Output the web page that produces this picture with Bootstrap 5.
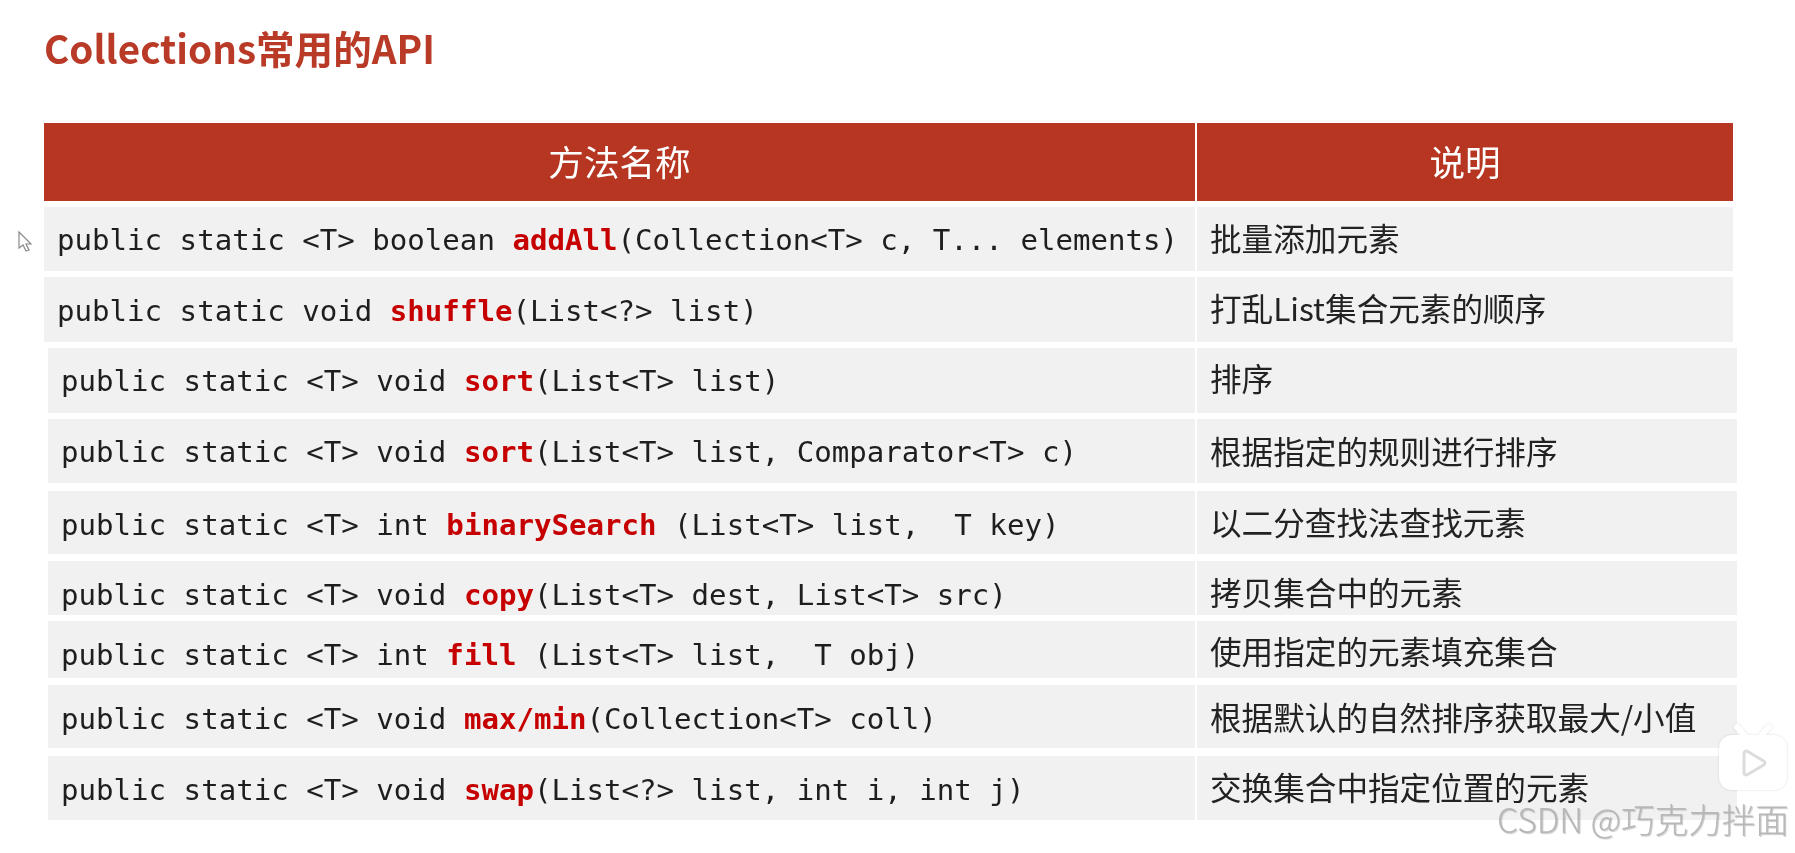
<!DOCTYPE html>
<html lang="zh">
<head>
<meta charset="utf-8">
<title>Collections常用的API</title>
<link href="https://cdn.jsdelivr.net/npm/bootstrap@5.3.0/dist/css/bootstrap.min.css" rel="stylesheet">
<style>
html,body{height:853px;overflow:hidden;background:#fff}
.sheet{position:relative;width:1795px;height:853px;padding:0 62px 0 44px;font-family:"DejaVu Sans Mono","Noto Sans CJK SC",monospace;filter:blur(.45px)}
.sheet-title{height:123px;padding-top:22px;margin:0;font:700 38.6px/50px "Noto Sans CJK SC",sans-serif;color:#b93a27}
.api-row{display:flex;gap:2px;margin-top:6px}
.api-row.shifted{margin-left:4px;margin-right:-4px}
.api-head{height:78px;margin-top:0}
.api-head .cell-a,.api-head .cell-b{background:#b73622;color:#fff;font:400 35.6px/76px "Noto Sans CJK SC",sans-serif;text-align:center;padding:0}
.cell-a{flex:0 0 1151px;background:#f1f1f1;padding-left:13px;font-size:29.1px;line-height:var(--la);color:#1e1e1e;white-space:pre}
.shifted .cell-a{flex-basis:1147px}
.cell-b{flex:1 1 0;min-width:0;background:#f1f1f1;padding-left:13px;font:400 31.6px/var(--lb) "Noto Sans CJK SC",sans-serif;color:#222;white-space:pre}
.kw{color:#c60000;font-weight:700}
.r1{height:64px;--la:67px;--lb:60px}
.r2{height:65px;--la:69px;--lb:61px}
.r3{height:65px;--la:67px;--lb:59px}
.r4{height:64px;--la:66px;--lb:62px}
.r5{height:63px;--la:69px;--lb:61px;margin-top:8px}
.r6{height:54px;--la:68px;--lb:60px;margin-top:7px}
.r7{height:57px;--la:69px;--lb:59px}
.r8{height:63px;--la:69px;--lb:63px;margin-top:7px}
.r9{height:64px;--la:68px;--lb:60px;margin-top:8px}
.mark-text{position:absolute;left:1497px;top:797px;font:300 33.6px/44px "Noto Sans CJK SC",sans-serif;color:rgba(180,180,180,.9);text-shadow:1px 1px 1px rgba(120,120,120,.4);white-space:pre}
.tv-logo{position:absolute;left:1717px;top:723px;filter:drop-shadow(0 0 1px rgba(0,0,0,.14))}
.cursor-mark{position:absolute;left:17px;top:230px}
</style>
</head>
<body>
<div class="sheet">
  <h1 class="sheet-title">Collections常用的API</h1>
  <div class="api-row api-head"><div class="cell-a">方法名称</div><div class="cell-b">说明</div></div>
  <div class="api-row r1"><div class="cell-a">public static &lt;T&gt; boolean <span class="kw">addAll</span>(Collection&lt;T&gt; c, T... elements)</div><div class="cell-b">批量添加元素</div></div>
  <div class="api-row r2"><div class="cell-a">public static void <span class="kw">shuffle</span>(List&lt;?&gt; list)</div><div class="cell-b">打乱List集合元素的顺序</div></div>
  <div class="api-row shifted r3"><div class="cell-a">public static &lt;T&gt; void <span class="kw">sort</span>(List&lt;T&gt; list)</div><div class="cell-b">排序</div></div>
  <div class="api-row shifted r4"><div class="cell-a">public static &lt;T&gt; void <span class="kw">sort</span>(List&lt;T&gt; list, Comparator&lt;T&gt; c)</div><div class="cell-b">根据指定的规则进行排序</div></div>
  <div class="api-row shifted r5"><div class="cell-a">public static &lt;T&gt; int <span class="kw">binarySearch</span> (List&lt;T&gt; list,  T key)</div><div class="cell-b">以二分查找法查找元素</div></div>
  <div class="api-row shifted r6"><div class="cell-a">public static &lt;T&gt; void <span class="kw">copy</span>(List&lt;T&gt; dest, List&lt;T&gt; src)</div><div class="cell-b">拷贝集合中的元素</div></div>
  <div class="api-row shifted r7"><div class="cell-a">public static &lt;T&gt; int <span class="kw">fill</span> (List&lt;T&gt; list,  T obj)</div><div class="cell-b">使用指定的元素填充集合</div></div>
  <div class="api-row shifted r8"><div class="cell-a">public static &lt;T&gt; void <span class="kw">max/min</span>(Collection&lt;T&gt; coll)</div><div class="cell-b">根据默认的自然排序获取最大/小值</div></div>
  <div class="api-row shifted r9"><div class="cell-a">public static &lt;T&gt; void <span class="kw">swap</span>(List&lt;?&gt; list, int i, int j)</div><div class="cell-b">交换集合中指定位置的元素</div></div>

  <svg class="cursor-mark" width="16" height="24" viewBox="0 0 16 24" aria-hidden="true"><path d="M2 2v16l4-3 3 6 3-1-3-6h5z" fill="#fff" stroke="#8a8a8a" stroke-width="1.2"/></svg>
  <svg class="tv-logo" width="72" height="70" viewBox="0 0 72 70" aria-hidden="true">
    <path d="M20 4l9 10M52 4l-9 10" stroke="#fff" stroke-width="6" stroke-linecap="round"/>
    <rect x="2" y="12" width="68" height="55" rx="13" fill="#fff"/>
    <path d="M27 30.500c0-2 2-3 3.700-2l16 9.500c1.600 1 1.600 3 0 4l-16 9.500c-1.700 1-3.700 0-3.700-2z" fill="#fff" stroke="#dcdcdc" stroke-width="3"/>
  </svg>
  <div class="mark-text">CSDN @巧克力拌面</div>
</div>
<script src="https://cdn.jsdelivr.net/npm/bootstrap@5.3.0/dist/js/bootstrap.bundle.min.js"></script>
</body>
</html>
